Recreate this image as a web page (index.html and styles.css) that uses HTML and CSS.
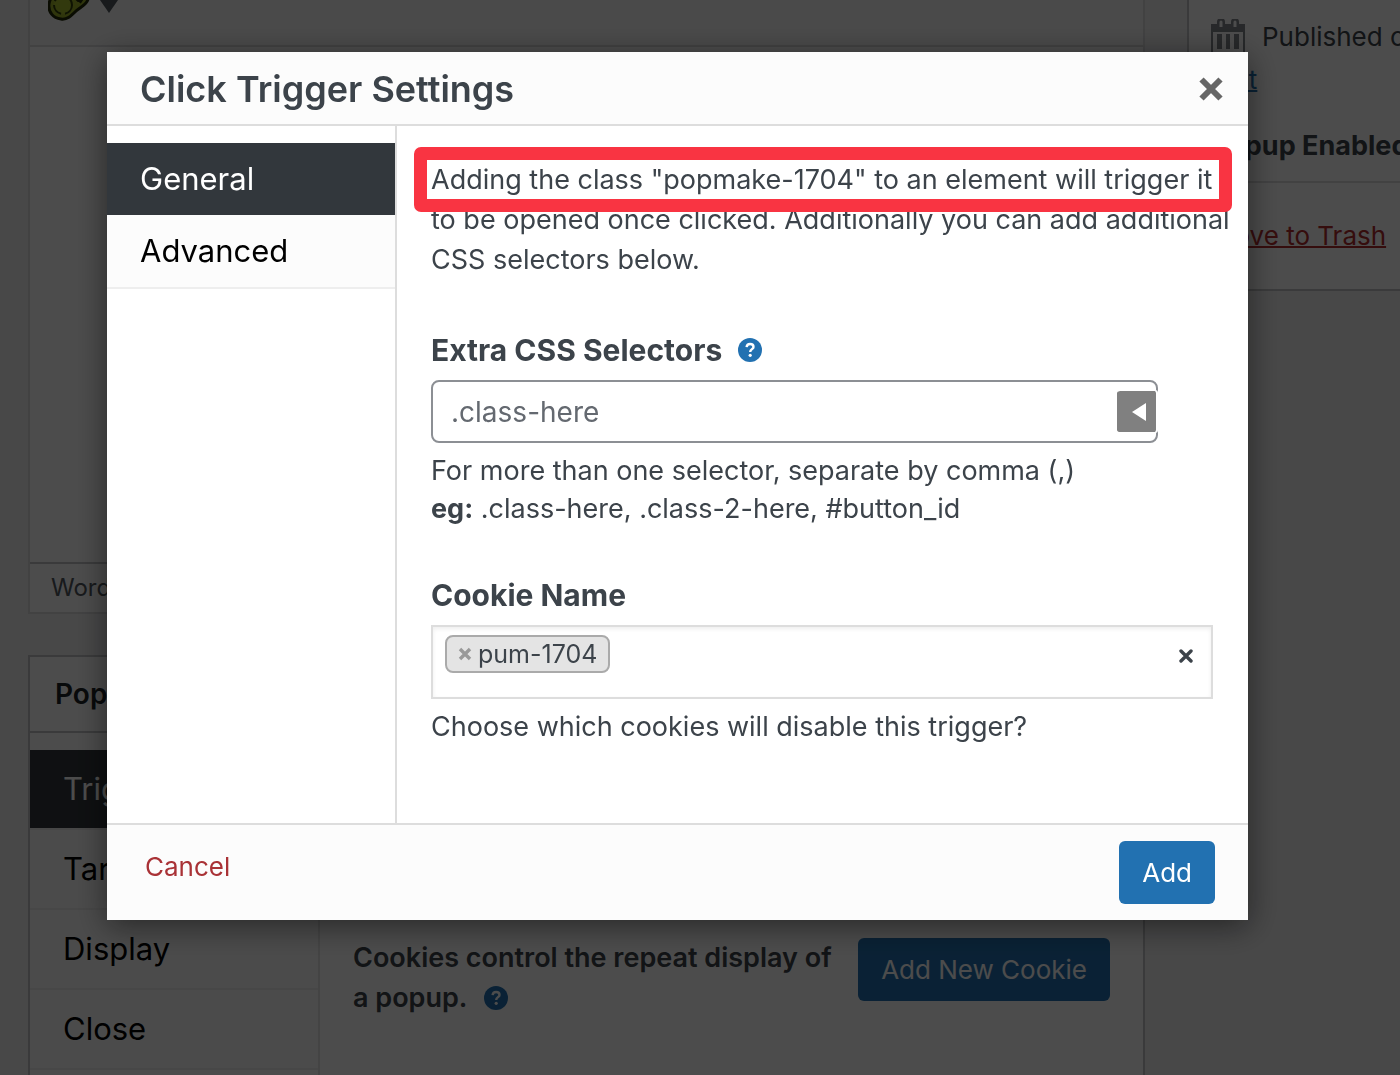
FILE: index.html
```html
<!DOCTYPE html>
<html lang="en">
<head>
    <meta charset="UTF-8">
    <meta name="viewport" content="width=device-width, initial-scale=1.0">
    <title>Edit Popup</title>
    <link rel="stylesheet" href="styles.css">
</head>
<body>
    <div class="page">
        <main class="main-column">
            <div class="editor">
                <div class="editor-toolbar">
                    <svg class="avocado" width="44" height="22" viewBox="0 0 44 22" aria-hidden="true">
                        <path d="M9 -8C20 -14 40 -8 40 -1C39 5 32 7 28 11C23 16 19 20 13 19C5 18 0 12 1 4C2 -2 4 -5 9 -8Z" fill="#9fb32b" stroke="#222a08" stroke-width="3"/>
                        <circle cx="15" cy="5" r="9" fill="#a9bf2e" stroke="#33400c" stroke-width="2" stroke-dasharray="12 4"/>
                        <path d="M27 -2l3 3 4-1-2 3" fill="none" stroke="#222a08" stroke-width="2"/>
                    </svg>
                    <svg class="caret" width="18" height="13" viewBox="0 0 18 13" aria-hidden="true">
                        <path d="M0 0H18L9 13Z" fill="#50575e"/>
                    </svg>
                </div>
                <div class="editor-body"></div>
                <div class="editor-status">Word count: 0</div>
            </div>

            <section class="metabox">
                <h2 class="metabox-title">Popup Settings</h2>
                <div class="metabox-body">
                    <nav class="metabox-tabs">
                        <a href="#" class="metabox-tab active">Triggers</a>
                        <a href="#" class="metabox-tab">Targeting</a>
                        <a href="#" class="metabox-tab">Display</a>
                        <a href="#" class="metabox-tab">Close</a>
                    </nav>
                    <div class="metabox-content">
                        <div class="cookie-row">
                            <p class="cookie-text">
                                Cookies control the repeat display of<br>a popup.
                                <svg class="help-icon" width="24" height="24" viewBox="0 0 24 24" aria-hidden="true">
                                    <circle cx="12" cy="12" r="12" fill="#2271b1"/>
                                    <path d="M8.6 9.2C8.8 7 10.2 6 12.1 6C14.2 6 15.5 7.2 15.5 8.9C15.5 11.2 12.2 11.2 12.2 14" fill="none" stroke="#fff" stroke-width="2.4"/>
                                    <circle cx="12.2" cy="17.3" r="1.6" fill="#fff"/>
                                </svg>
                            </p>
                            <button type="button" class="button-primary">Add New Cookie</button>
                        </div>
                    </div>
                </div>
            </section>
        </main>

        <aside class="publish-box">
            <div class="publish-info">
                <p class="publish-date">
                    <svg class="calendar" width="34" height="36" viewBox="0 0 34 36" aria-hidden="true">
                        <path fill="#82878c" fill-rule="evenodd" d="M0 5H6V3a4 4 0 0 1 8 0V5H20V3a4 4 0 0 1 8 0V5H34V36H0ZM2 13V34H32V13ZM8.5 3V8h3V3a1.5 1.5 0 0 0-3 0ZM22.5 3V8h3V3a1.5 1.5 0 0 0-3 0Z"/>
                        <path fill="#82878c" d="M6 15h5v15H6zM15 15h4v15h-4zM23 15h5v15h-5z"/>
                    </svg>
                    Published on:
                </p>
                <p class="publish-edit"><a href="#" class="edit-link">Edit</a></p>
                <p class="popup-enabled">Popup Enabled</p>
            </div>
            <div class="publish-actions">
                <a href="#" class="trash-link">Move to Trash</a>
            </div>
        </aside>
    </div>

    <div class="overlay">
        <div class="modal" role="dialog" aria-labelledby="modalTitle">
            <div class="modal-header">
                <h2 id="modalTitle">Click Trigger Settings</h2>
                <button type="button" class="icon-button" aria-label="Close">
                    <svg width="24" height="24" viewBox="0 0 24 24">
                        <path d="M2.5 2.5L21.5 21.5M21.5 2.5L2.5 21.5" stroke="#666" stroke-width="6"/>
                    </svg>
                </button>
            </div>

            <div class="modal-body">
                <nav class="modal-tabs">
                    <a href="#" class="modal-tab active">General</a>
                    <a href="#" class="modal-tab">Advanced</a>
                </nav>

                <form class="modal-content" id="triggerForm">
                    <p class="intro">
                        Adding the class "popmake-1704" to an element will trigger it<br>
                        to be opened once clicked. Additionally you can add additional<br>
                        CSS selectors below.
                        <span class="highlight"></span>
                    </p>

                    <div class="field">
                        <div class="field-label">
                            <label for="selectors">Extra CSS Selectors</label>
                            <svg class="help-icon" width="24" height="24" viewBox="0 0 24 24" aria-hidden="true">
                                <circle cx="12" cy="12" r="12" fill="#2271b1"/>
                                <path d="M8.6 9.2C8.8 7 10.2 6 12.1 6C14.2 6 15.5 7.2 15.5 8.9C15.5 11.2 12.2 11.2 12.2 14" fill="none" stroke="#fff" stroke-width="2.4"/>
                                <circle cx="12.2" cy="17.3" r="1.6" fill="#fff"/>
                            </svg>
                        </div>
                        <div class="selector-input">
                            <input type="text" id="selectors" name="selectors" placeholder=".class-here">
                            <button type="button" class="selector-toggle" aria-label="Insert">
                                <svg width="14" height="18" viewBox="0 0 14 18">
                                    <path d="M14 0V18L0 9Z" fill="#fff"/>
                                </svg>
                            </button>
                        </div>
                        <p class="description">For more than one selector, separate by comma (,)<br><strong>eg:</strong> .class-here, .class-2-here, #button_id</p>
                    </div>

                    <div class="field">
                        <div class="field-label">
                            <label for="cookieName">Cookie Name</label>
                        </div>
                        <div class="cookie-select">
                            <span class="tag">
                                <button type="button" class="icon-button" aria-label="Remove pum-1704">
                                    <svg width="14" height="14" viewBox="0 0 14 14">
                                        <path d="M2 2L12 12M12 2L2 12" stroke="#999" stroke-width="3.4"/>
                                    </svg>
                                </button>
                                pum-1704
                            </span>
                            <input type="text" id="cookieName" name="cookieName" class="cookie-search">
                            <button type="button" class="icon-button" aria-label="Clear">
                                <svg width="14" height="14" viewBox="0 0 14 14">
                                    <path d="M2 2L12 12M12 2L2 12" stroke="#3c434a" stroke-width="3.4" stroke-linecap="round"/>
                                </svg>
                            </button>
                        </div>
                        <p class="description">Choose which cookies will disable this trigger?</p>
                    </div>
                </form>
            </div>

            <div class="modal-footer">
                <button type="button" class="cancel-button">Cancel</button>
                <button type="submit" form="triggerForm" class="button-primary">Add</button>
            </div>
        </div>
    </div>
</body>
</html>
```
FILE: styles.css
```css
* {
    box-sizing: border-box;
}

body {
    margin: 0;
    height: 100vh;
    overflow: hidden;
    background-color: #f0f0f1;
    color: #3c434a;
    font-family: Inter, "Liberation Sans", sans-serif;
    font-size: 26px;
    line-height: 40px;
}

h2,
p {
    margin: 0;
}

a {
    text-decoration-thickness: 2px;
}

button,
input {
    font-family: inherit;
    font-size: 26px;
}

button {
    cursor: pointer;
}

.button-primary {
    height: 63px;
    padding: 0 23px;
    border: none;
    border-radius: 6px;
    background-color: #2271b1;
    color: #fff;
    white-space: nowrap;
}

.icon-button {
    display: flex;
    padding: 0;
    border: none;
    background: none;
}

/* Page behind the modal */
.page {
    display: flex;
    align-items: flex-start;
    gap: 42px;
    height: 100vh;
    padding-left: 28px;
    overflow: hidden;
}

.main-column {
    flex: 1;
    display: flex;
    flex-direction: column;
    gap: 41px;
    height: 100%;
}

.editor {
    border: 2px solid #dcdcde;
    border-top: none;
    background-color: #fff;
}

.editor-toolbar {
    display: flex;
    gap: 8px;
    height: 47px;
    padding-left: 18px;
    border-bottom: 2px solid #dcdcde;
    background-color: #f8f8f8;
}

.editor-body {
    height: 515px;
}

.editor-status {
    padding: 4px 21px;
    border-top: 2px solid #c3c4c7;
    font-size: 24px;
    color: #50575e;
}

.metabox {
    flex: 1;
    display: flex;
    flex-direction: column;
    border: 2px solid #c3c4c7;
    border-bottom: none;
    background-color: #fff;
}

.metabox-title {
    padding: 17px 25px;
    border-bottom: 2px solid #c3c4c7;
    color: #1d2327;
    font-size: 28px;
    font-weight: 600;
}

.metabox-body {
    flex: 1;
    display: flex;
}

.metabox-tabs {
    width: 290px;
    padding-top: 17px;
    border-right: 2px solid #e5e5e5;
}

.metabox-tab {
    display: block;
    padding: 19px 33px;
    border-bottom: 2px solid #eee;
    background-color: #fcfcfc;
    color: #000;
    font-size: 31px;
    text-decoration: none;
}

.metabox-tab.active {
    background-color: #32373c;
    color: #fff;
}

.metabox-content {
    flex: 1;
    padding: 205px 33px 0;
}

.cookie-row {
    display: flex;
    justify-content: space-between;
    align-items: flex-start;
}

.cookie-text {
    font-size: 27px;
    font-weight: 600;
    white-space: nowrap;
}

.help-icon {
    margin-left: 10px;
    vertical-align: -3px;
}

.publish-box {
    width: 213px;
    border: 2px solid #c3c4c7;
    border-width: 0 0 2px 2px;
    background-color: #fff;
    white-space: nowrap;
}

.publish-info {
    padding: 17px 22px 15px;
    border-bottom: 2px solid #dcdcde;
}

.publish-date {
    display: flex;
    align-items: center;
    gap: 17px;
}

.calendar {
    flex: none;
}

.publish-edit {
    margin: 3px 0 26px;
}

.edit-link {
    color: #2271b1;
}

.popup-enabled {
    font-size: 27px;
    font-weight: 700;
}

.publish-actions {
    padding: 33px 22px;
}

.trash-link {
    color: #b32d2e;
}

/* Modal */
.overlay {
    position: fixed;
    inset: 0;
    padding: 52px 152px 0 107px;
    background-color: rgba(0, 0, 0, 0.7);
}

.modal {
    background-color: #fff;
    box-shadow: 0 6px 30px rgba(0, 0, 0, 0.5);
}

.modal-header {
    display: flex;
    justify-content: space-between;
    align-items: center;
    padding: 17px 25px 15px 33px;
    border-bottom: 2px solid #ddd;
    background-color: #fcfcfc;
}

.modal-header h2 {
    font-size: 36px;
    font-weight: 600;
}

.modal-body {
    display: flex;
}

.modal-tabs {
    width: 290px;
    padding-top: 17px;
    border-right: 2px solid #ddd;
}

.modal-tab {
    display: block;
    padding: 16px 33px;
    border-bottom: 2px solid #eee;
    background-color: #fcfcfc;
    color: #000;
    font-size: 31px;
    text-decoration: none;
}

.modal-tab.active {
    border-bottom: none;
    background-color: #32373c;
    color: #fff;
}

.modal-content {
    flex: 1;
    min-width: 0;
    padding: 34px 35px 30px 34px;
    font-size: 27px;
}

.intro {
    position: relative;
    margin-bottom: 50px;
    white-space: nowrap;
}

.highlight {
    position: absolute;
    top: -13px;
    left: -17px;
    right: -19px;
    height: 65px;
    border: 13px solid #f93442;
    border-radius: 7px;
}

.field {
    margin-bottom: 47px;
}

.field-label {
    display: flex;
    align-items: center;
    gap: 6px;
    margin-bottom: 10px;
    font-size: 30px;
    font-weight: 700;
}

.selector-input {
    position: relative;
    width: 727px;
    max-width: 100%;
}

.selector-input input {
    display: block;
    width: 100%;
    height: 63px;
    padding: 0 18px;
    border: 2px solid #8c8f94;
    border-radius: 8px;
    background-color: #fff;
    font-size: 28px;
}

.selector-input input::placeholder {
    color: #646970;
}

.selector-toggle {
    position: absolute;
    top: 10px;
    right: 0;
    display: flex;
    align-items: center;
    justify-content: center;
    width: 41px;
    height: 43px;
    padding: 0 0 0 4px;
    border: solid #fff;
    border-width: 1px 2px 1px 0;
    border-radius: 3px;
    background-color: #808080;
    background-clip: padding-box;
}

.description {
    margin-top: 9px;
    line-height: 38px;
}

.cookie-select {
    display: flex;
    align-items: flex-start;
    height: 74px;
    padding: 8px 18px 8px 12px;
    border: 2px solid #ddd;
    box-shadow: inset 0 2px 4px rgba(0, 0, 0, 0.07);
}

.cookie-select > .icon-button {
    margin-top: 14px;
}

.tag {
    display: flex;
    align-items: center;
    gap: 6px;
    height: 38px;
    padding: 0 11px;
    border: 2px solid #aaa;
    border-radius: 8px;
    background-color: #e4e4e4;
    font-size: 25px;
}

.cookie-search {
    flex: 1;
    min-width: 0;
    height: 38px;
    border: none;
    background: none;
    outline: none;
}

.modal-footer {
    display: flex;
    justify-content: space-between;
    align-items: flex-start;
    padding: 16px 33px 16px 38px;
    border-top: 2px solid #ddd;
    background-color: #fcfcfc;
}

.cancel-button {
    padding: 0;
    border: none;
    background: none;
    color: #a93236;
    line-height: 52px;
}
```
